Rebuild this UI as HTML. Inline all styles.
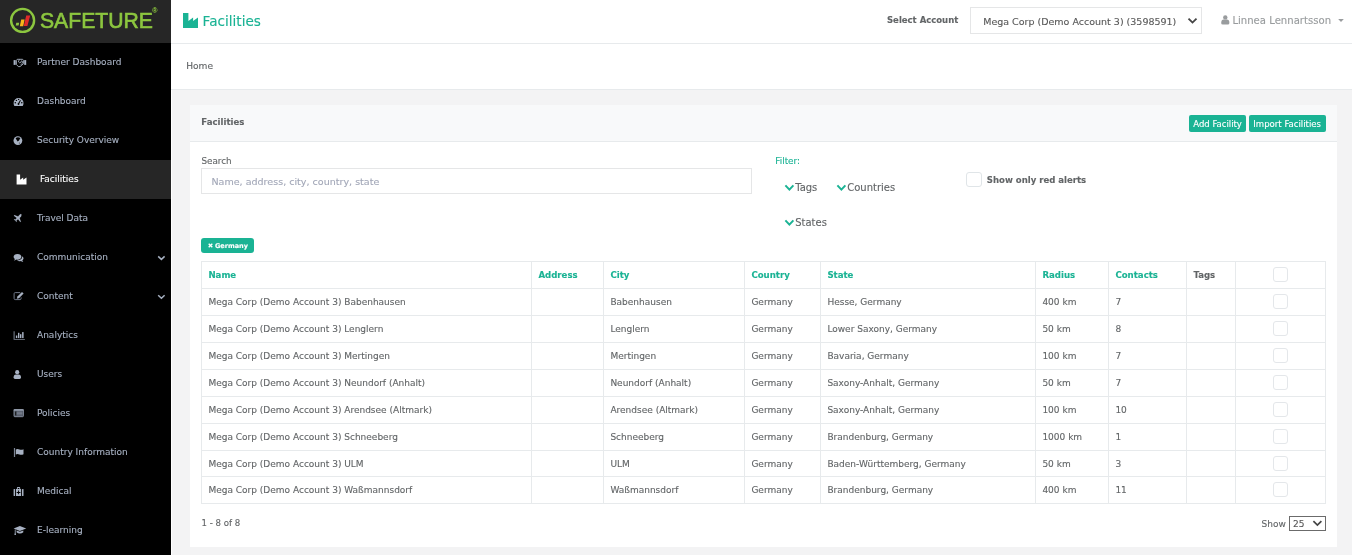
<!DOCTYPE html>
<html lang="en">
<head>
<meta charset="utf-8">
<title>Facilities</title>
<style>
*{box-sizing:border-box;margin:0;padding:0}
html,body{width:1352px;height:555px;overflow:hidden}
body{font-family:"DejaVu Sans","Liberation Sans",sans-serif;font-size:9px;color:#626567;-webkit-text-stroke:0.12px;background:#f3f3f4;position:relative}
.abs{position:absolute;white-space:nowrap}
#side,#top,#crumb,#panel{will-change:transform}
#strip{position:absolute;left:171px;top:0;width:1px;height:555px;background:#fff}
#side{position:absolute;left:0;top:0;width:171px;height:555px;background:#000}
#logo{position:absolute;left:0;top:0;width:171px;height:43px;background:#262626}
.nav{position:absolute;left:0;width:171px;height:39px;color:#a7b1c2}
.nav.act{background:#262626;color:#fff}
#icons{position:absolute;left:0;top:0}
#top{position:absolute;left:171px;top:0;width:1181px;height:44px;background:#fff;border-bottom:1px solid #e7eaec}
#crumb{position:absolute;left:171px;top:44px;width:1181px;height:46px;background:#fff;border-bottom:1px solid #e7eaec}
#panel{position:absolute;left:190px;top:105px;width:1147px;height:442px;background:#fff}
#phead{position:absolute;left:0;top:0;width:1147px;height:37px;background:#f8f9fa;border-bottom:1px solid #e7eaec}
.btn{position:absolute;top:10px;height:17px;background:#1ab394;border-radius:2px}
.btn .abs{color:#fff}
table{position:absolute;left:11px;top:156px;border-collapse:collapse;table-layout:fixed;width:1125px;font-size:9px}
td,th{border:1px solid #e7eaec;height:27px;padding:7.2px 0 0 6.4px;text-align:left;vertical-align:top;white-space:nowrap;font-weight:400;line-height:13px}
th{font-weight:700;color:#1ab394;font-size:8.6px}
tr.s td{height:26px}
.cb{display:block;width:15px;height:14.5px;border:1px solid #e4e7ea;border-radius:3px;background:#fff;margin:0 auto}
td.c,th.c{padding:5px 0 0 0}
</style>
</head>
<body>
<div id="side">
<div id="logo"><div class="abs" id="brand" style="left:39.6px;top:8px;font-family:'Liberation Sans',sans-serif;font-size:22px;line-height:26px;color:#8cc63f;transform:scaleX(0.962);transform-origin:0 0;-webkit-text-stroke:0.65px #8cc63f">SAFETURE</div><div class="abs" style="left:152.3px;top:6.5px;font-family:'Liberation Sans',sans-serif;font-size:7px;line-height:8px;color:#8cc63f">®</div></div>
<div class="nav" style="top:43px"><div class="abs" style="left:37.00px;top:12.50px;font-size:9px;line-height:13px">Partner Dashboard</div></div>
<div class="nav" style="top:82px"><div class="abs" style="left:37.00px;top:12.50px;font-size:9px;line-height:13px">Dashboard</div></div>
<div class="nav" style="top:121px"><div class="abs" style="left:37.00px;top:12.50px;font-size:9px;line-height:13px">Security Overview</div></div>
<div class="nav act" style="top:160px"><div class="abs" style="left:40.00px;top:12.50px;font-size:9px;line-height:13px">Facilities</div></div>
<div class="nav" style="top:199px"><div class="abs" style="left:37.00px;top:12.50px;font-size:9px;line-height:13px">Travel Data</div></div>
<div class="nav" style="top:238px"><div class="abs" style="left:37.00px;top:12.50px;font-size:9px;line-height:13px">Communication</div></div>
<div class="nav" style="top:277px"><div class="abs" style="left:37.00px;top:12.50px;font-size:9px;line-height:13px">Content</div></div>
<div class="nav" style="top:316px"><div class="abs" style="left:37.00px;top:12.50px;font-size:9px;line-height:13px">Analytics</div></div>
<div class="nav" style="top:355px"><div class="abs" style="left:37.00px;top:12.50px;font-size:9px;line-height:13px">Users</div></div>
<div class="nav" style="top:394px"><div class="abs" style="left:37.00px;top:12.50px;font-size:9px;line-height:13px">Policies</div></div>
<div class="nav" style="top:433px"><div class="abs" style="left:37.00px;top:12.50px;font-size:9px;line-height:13px">Country Information</div></div>
<div class="nav" style="top:472px"><div class="abs" style="left:37.00px;top:12.50px;font-size:9px;line-height:13px">Medical</div></div>
<div class="nav" style="top:511px"><div class="abs" style="left:37.00px;top:12.50px;font-size:9px;line-height:13px">E-learning</div></div>
<svg id="icons" width="171" height="555" viewBox="0 0 171 555">
<!-- logo mark -->
<circle cx="22.6" cy="20.4" r="11.5" fill="none" stroke="#8cc63f" stroke-width="2.4"/>
<polygon points="16.3,22.7 19.2,22.7 18.6,25.5 15.7,25.5" fill="#8cc63f"/>
<polygon points="21.2,19.4 24.6,19.4 23.2,26.2 19.8,26.2" fill="#f7b619"/>
<polygon points="26.2,15.6 30.2,15.6 27.4,26 23.8,26" fill="#e02a2a"/>
<g fill="#a7b1c2" stroke="none">
<!-- handshake -->
<rect x="13.6" y="60.1" width="2.1" height="4.8"/><rect x="24.2" y="60.1" width="2" height="4.8"/>
<path d="M17.2,59.3 H22.6 L23.6,60.5 V63.6 L20,66.6 H18.3 L16.4,64.4 V60.5 Z" fill="none" stroke="#a7b1c2" stroke-width="0.9"/>
<path d="M20,59.5 Q17.9,60.6 18.5,61.9 Q19.5,63.4 20.9,62.3 L21.4,61" fill="none" stroke="#a7b1c2" stroke-width="0.85"/>
<path d="M21.6,60.4 Q23.2,61.7 22.2,63.3 L20.8,64.9" fill="none" stroke="#a7b1c2" stroke-width="0.85"/>
<!-- tachometer -->
<path d="M14.4,106 Q13.6,104.6 13.6,102.9 A4.95,4.95 0 0 1 23.5,102.9 Q23.5,104.6 22.7,106 Z"/>
<g fill="#000"><circle cx="15.3" cy="102.8" r="0.8"/><circle cx="16.4" cy="100.4" r="0.7"/><circle cx="18.6" cy="99.4" r="0.7"/><circle cx="21.8" cy="102.8" r="0.8"/><circle cx="18.5" cy="104" r="0.9"/><path d="M18.1,103.5 L20.1,100 L20.9,100.4 L19,104 Z"/></g>
<!-- globe -->
<circle cx="17.9" cy="140.6" r="4.4"/>
<path d="M15.6,138.2 Q17.6,136.6 20.4,138 L19,140.4 L17.6,141.6 Z" fill="#000"/>
<circle cx="19.4" cy="143" r="0.6" fill="#333"/>
<!-- factory (active) -->
<path d="M16.6,174.6 h3.5 v5.2 l3.1,-2.2 v2.2 l3.3,-2.2 V184.5 H16.6 Z" fill="#fff"/>
<!-- plane -->
<path stroke="#a7b1c2" stroke-width="0.12" d="M21.3,214.1 Q20.2,214 19.4,214.9 L18.1,216.4 L14.3,215.1 L13.9,215.7 L16.7,218 L15.4,219.5 L14.2,219.3 L13.9,219.7 L15.4,220.6 L16.3,222.1 L16.7,221.8 L16.5,220.6 L18,219.3 L20.3,222.1 L20.9,221.7 L19.6,217.9 L21.1,216.6 Q21.6,215.2 21.3,214.1 Z"/>
<!-- comments -->
<path d="M17.5,253.9 C19.8,253.9 21.4,255.2 21.4,256.8 C21.4,258.4 19.8,259.7 17.5,259.7 C17,259.7 16.6,259.6 16.2,259.5 C15.5,260.1 14.6,260.4 13.8,260.4 C14.4,260 14.8,259.4 14.9,258.9 C14.1,258.4 13.6,257.6 13.6,256.8 C13.6,255.2 15.2,253.9 17.5,253.9 Z"/>
<path d="M22.2,256.2 C23,256.7 23.5,257.5 23.5,258.3 C23.5,259.1 23,259.9 22.3,260.4 C22.4,260.9 22.8,261.5 23.3,261.9 C22.5,261.9 21.6,261.6 20.9,261 C20.5,261.1 20.1,261.2 19.6,261.2 C18.5,261.2 17.5,260.9 16.8,260.4 C17,260.4 17.3,260.4 17.5,260.4 C20.2,260.4 22.2,258.8 22.2,256.8 C22.2,256.6 22.2,256.4 22.2,256.2 Z"/>
<!-- edit -->
<path d="M20.2,292.6 H15.2 Q14.1,292.6 14.1,293.7 V298.5 Q14.1,299.6 15.2,299.6 H20 Q21.1,299.6 21.1,298.5 V297.4" fill="none" stroke="#6f7787" stroke-width="1"/>
<path d="M22,292 L23.6,293.6 L19,298.2 L16.8,298.8 L17.4,296.6 Z"/>
<!-- bar chart -->
<path d="M13.6,331.2 h1 v7.7 h10.3 v0.9 H13.6 Z" fill="#7d8594"/>
<rect x="15.9" y="335.5" width="1.4" height="2.6"/><rect x="18" y="332.8" width="1.4" height="5.3"/><rect x="20" y="334.2" width="1.4" height="3.9"/><rect x="22.1" y="332.1" width="1.5" height="6"/>
<!-- user -->
<circle cx="17.2" cy="372.2" r="2.1"/>
<path d="M13.6,377.6 Q13.6,374.5 16,374.5 H18.6 Q21,374.5 21,377.6 Q21,379 19.6,379 H15 Q13.6,379 13.6,377.6 Z"/>
<!-- list-alt -->
<rect x="14" y="409.6" width="9.4" height="7.1" rx="0.8" fill="#4a505c" stroke="#8d96a6" stroke-width="0.9"/>
<rect x="13.6" y="409.2" width="10.2" height="1.5" rx="0.6" fill="#97a0b0"/>
<rect x="16.8" y="411.7" width="5.6" height="0.8" fill="#8d96a6"/><rect x="16.8" y="413.1" width="5.6" height="0.8" fill="#7d8594"/><rect x="16.8" y="414.5" width="5.6" height="0.8" fill="#7d8594"/>
<rect x="15.1" y="411.7" width="1" height="3.6" fill="#1a1a1a"/>
<!-- flag -->
<rect x="13.9" y="448" width="1.2" height="9" fill="#7d8594"/>
<path d="M15.8,449.4 Q17.6,448.6 19.4,449.4 Q21.4,450.2 23.5,449.2 V454.2 Q21.4,455.2 19.4,454.4 Q17.6,453.6 15.8,454.4 Z"/>
<!-- medkit -->
<rect x="13.6" y="489" width="1.5" height="7" rx="0.5"/><rect x="22" y="489" width="1.5" height="7" rx="0.5"/>
<path d="M16,489 h0.9 v-1.1 q0,-0.9 0.9,-0.9 h1.5 q0.9,0 0.9,0.9 v1.1 h0.9 v7 h-5.1 Z M17.8,489 h1.5 v-1 h-1.5 Z"/>
<path d="M18.1,490.6 h0.9 v1.4 h1.4 v0.9 h-1.4 v1.4 h-0.9 v-1.4 h-1.4 v-0.9 h1.4 Z" fill="#000"/>
<!-- graduation cap -->
<path d="M13.6,528.6 L19.9,526 L26.2,528.6 L19.9,531 Z"/>
<path d="M16.6,530.4 L19.9,531.7 L23.3,530.4 V532.2 Q21.8,533.6 19.9,533.6 Q18,533.6 16.6,532.2 Z"/>
<path d="M14.8,529.4 h0.8 v3 l0.4,2.6 h-1.6 l0.4,-2.6 Z"/>
</g>
<!-- chevrons -->
<path d="M158.2,256.4 L161.4,259.4 L164.6,256.4" fill="none" stroke="#a7b1c2" stroke-width="1.5"/>
<path d="M158.2,295.2 L161.4,298.2 L164.6,295.2" fill="none" stroke="#a7b1c2" stroke-width="1.5"/>
</svg>

</div>
<div id="strip"></div>
<div id="top">
  <svg class="abs" style="left:12px;top:13px" width="15" height="15" viewBox="0 0 15 15"><path d="M0,0 h5.4 v7.9 l4.7,-3.3 v3.3 l4.9,-3.3 V15 H0 Z" fill="#1ab394"/></svg>
  <div class="abs" id="ttl" style="left:31.60px;top:11.50px;font-size:13.6px;line-height:19px;color:#1ab394">Facilities</div>
  <div class="abs" style="left:716.00px;top:14.00px;font-size:8.5px;line-height:12px;font-weight:700">Select Account</div>
  <div class="abs" id="selbox" style="left:799px;top:7px;width:232px;height:27px;border:1px solid #e5e6e7;background:#fff"><div class="abs" style="left:12.20px;top:7.00px;font-size:9.5px;line-height:13px;color:#585858">Mega Corp (Demo Account 3) (3598591)</div><svg class="abs" style="left:216px;top:9px" width="11" height="8" viewBox="0 0 11 8"><path d="M1.5,1.6 L5.5,5.6 L9.5,1.6" fill="none" stroke="#444" stroke-width="1.8"/></svg></div>
  <svg class="abs" style="left:1050px;top:15.3px" width="9" height="10" viewBox="0 0 9 10"><circle cx="4.3" cy="2.4" r="2.2" fill="#999c9e"/><path d="M0.2,8 Q0.2,4.6 2.8,4.6 H5.8 Q8.4,4.6 8.4,8 Q8.4,9.6 6.8,9.6 H1.8 Q0.2,9.6 0.2,8 Z" fill="#999c9e"/></svg>
  <div class="abs" id="user" style="left:1061.40px;top:13.50px;font-size:10.1px;line-height:14px;color:#999c9e">Linnea Lennartsson</div>
  <svg class="abs" style="left:1167px;top:19px" width="6" height="3" viewBox="0 0 6 3"><path d="M0.2,0 H5.8 L3,2.9 Z" fill="#999c9e"/></svg>
</div>
<div id="crumb"><div class="abs" style="left:15.20px;top:15.50px;font-size:9.1px;line-height:13px">Home</div></div>
<div id="panel">
  <div id="phead">
    <div class="abs" style="left:11.30px;top:11.00px;font-size:8.6px;line-height:12px;font-weight:700">Facilities</div>
    <div class="btn" style="left:999px;width:57px"><div class="abs" style="left:4.30px;top:3.00px;font-size:8.5px;line-height:12px">Add Facility</div></div>
    <div class="btn" style="left:1059px;width:77px"><div class="abs" style="left:4.30px;top:3.00px;font-size:8.55px;line-height:12px">Import Facilities</div></div>
  </div>
  <div class="abs" style="left:11.40px;top:50.00px;font-size:8.8px;line-height:12px">Search</div>
  <div class="abs" style="left:11px;top:63px;width:551px;height:26px;border:1px solid #e5e6e7"><div class="abs" style="left:9.40px;top:6.00px;font-size:9.55px;line-height:13px;color:#a3a8b8">Name, address, city, country, state</div></div>
  <div class="abs" style="left:585.30px;top:50.00px;font-size:8.85px;line-height:12px;color:#1ab394">Filter:</div>
  <svg class="abs" style="left:594px;top:79px" width="11" height="9" viewBox="0 0 11 9"><path d="M1.4,1.4 L5.4,5.6 L9.4,1.4" fill="none" stroke="#1ab394" stroke-width="2"/></svg>
  <div class="abs" style="left:605.20px;top:75.50px;font-size:10px;line-height:14px">Tags</div>
  <svg class="abs" style="left:646px;top:79px" width="11" height="9" viewBox="0 0 11 9"><path d="M1.4,1.4 L5.4,5.6 L9.4,1.4" fill="none" stroke="#1ab394" stroke-width="2"/></svg>
  <div class="abs" style="left:657.20px;top:75.50px;font-size:10px;line-height:14px">Countries</div>
  <svg class="abs" style="left:594px;top:114px" width="11" height="9" viewBox="0 0 11 9"><path d="M1.4,1.4 L5.4,5.6 L9.4,1.4" fill="none" stroke="#1ab394" stroke-width="2"/></svg>
  <div class="abs" style="left:605.20px;top:110.50px;font-size:10px;line-height:14px">States</div>
  <div class="abs" style="left:776px;top:67px;width:15.5px;height:14.5px;border:1px solid #e0e5e8;border-radius:3px"></div>
  <div class="abs" style="left:796.80px;top:69.00px;font-size:8.55px;line-height:12px;font-weight:700">Show only red alerts</div>
  <div class="abs" style="left:11px;top:133px;width:53px;height:15px;background:#1ab394;border-radius:3px"><svg class="abs" style="left:6.6px;top:5px" width="5" height="5" viewBox="0 0 5 5"><path d="M0.7,0.7 L4.3,4.3 M4.3,0.7 L0.7,4.3" stroke="#fff" stroke-width="1.4" fill="none"/></svg><div class="abs" style="left:14.00px;top:3.50px;font-size:6.5px;line-height:9px;font-weight:700;color:#fff">Germany</div></div>
  <table>
    <colgroup><col style="width:330px"><col style="width:72px"><col style="width:141px"><col style="width:76px"><col style="width:215px"><col style="width:73px"><col style="width:78px"><col style="width:49px"><col style="width:90px"></colgroup>
    <tr><th>Name</th><th>Address</th><th>City</th><th>Country</th><th>State</th><th>Radius</th><th>Contacts</th><th style="color:#626567">Tags</th><th class="c"><i class="cb"></i></th></tr>
    <tr><td>Mega Corp (Demo Account 3) Babenhausen</td><td></td><td>Babenhausen</td><td>Germany</td><td>Hesse, Germany</td><td>400 km</td><td>7</td><td></td><td class="c"><i class="cb"></i></td></tr>
    <tr><td>Mega Corp (Demo Account 3) Lenglern</td><td></td><td>Lenglern</td><td>Germany</td><td>Lower Saxony, Germany</td><td>50 km</td><td>8</td><td></td><td class="c"><i class="cb"></i></td></tr>
    <tr><td>Mega Corp (Demo Account 3) Mertingen</td><td></td><td>Mertingen</td><td>Germany</td><td>Bavaria, Germany</td><td>100 km</td><td>7</td><td></td><td class="c"><i class="cb"></i></td></tr>
    <tr><td>Mega Corp (Demo Account 3) Neundorf (Anhalt)</td><td></td><td>Neundorf (Anhalt)</td><td>Germany</td><td>Saxony-Anhalt, Germany</td><td>50 km</td><td>7</td><td></td><td class="c"><i class="cb"></i></td></tr>
    <tr><td>Mega Corp (Demo Account 3) Arendsee (Altmark)</td><td></td><td>Arendsee (Altmark)</td><td>Germany</td><td>Saxony-Anhalt, Germany</td><td>100 km</td><td>10</td><td></td><td class="c"><i class="cb"></i></td></tr>
    <tr><td>Mega Corp (Demo Account 3) Schneeberg</td><td></td><td>Schneeberg</td><td>Germany</td><td>Brandenburg, Germany</td><td>1000 km</td><td>1</td><td></td><td class="c"><i class="cb"></i></td></tr>
    <tr class="s"><td>Mega Corp (Demo Account 3) ULM</td><td></td><td>ULM</td><td>Germany</td><td>Baden-Württemberg, Germany</td><td>50 km</td><td>3</td><td></td><td class="c"><i class="cb"></i></td></tr>
    <tr><td>Mega Corp (Demo Account 3) Waßmannsdorf</td><td></td><td>Waßmannsdorf</td><td>Germany</td><td>Brandenburg, Germany</td><td>400 km</td><td>11</td><td></td><td class="c"><i class="cb"></i></td></tr>
  </table>
  <div class="abs" style="left:11.50px;top:412.00px;font-size:8.6px;line-height:12px">1 - 8 of 8</div>
  <div class="abs" style="left:1071.60px;top:412.50px;font-size:9px;line-height:13px">Show</div>
  <div class="abs" style="left:1099px;top:411px;width:37px;height:15px;border:1px solid #6b6b6b;background:#fff"><div class="abs" style="left:3.00px;top:0.50px;font-size:9px;line-height:13px;color:#555">25</div><svg class="abs" style="left:22px;top:3px" width="11" height="8" viewBox="0 0 11 8"><path d="M1.4,1.2 L5.4,5.1 L9.4,1.2" fill="none" stroke="#444" stroke-width="1.7"/></svg></div>
</div>
</body>
</html>
